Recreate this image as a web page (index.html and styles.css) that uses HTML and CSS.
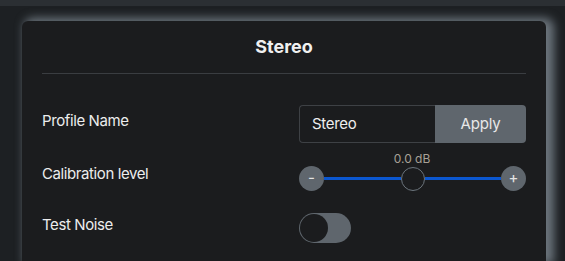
FILE: index.html
```html
<!DOCTYPE html>
<html lang="en">
<head>
<meta charset="utf-8">
<title>Stereo</title>
<link rel="stylesheet" href="styles.css">
</head>
<body>
<div class="topbar"></div>
<div class="card">
  <div class="card-header">Stereo</div>
  <div class="card-body">
    <div class="row">
      <div class="label">Profile Name</div>
      <div class="control">
        <div class="input-group">
          <div class="input">Stereo</div>
          <div class="btn">Apply</div>
        </div>
      </div>
    </div>
    <div class="row row-slider">
      <div class="label">Calibration level</div>
      <div class="control">
        <div class="slider-value">0.0 dB</div>
        <div class="slider">
          <div class="step">-</div>
          <div class="track"></div>
          <div class="thumb"></div>
          <div class="track"></div>
          <div class="step">+</div>
        </div>
      </div>
    </div>
    <div class="row row-toggle">
      <div class="label">Test Noise</div>
      <div class="control">
        <div class="toggle"><div class="knob"></div></div>
      </div>
    </div>
  </div>
</div>
</body>
</html>
```
FILE: styles.css
```css
* { box-sizing: border-box; }
html, body { height: 100%; }
body {
  margin: 0;
  background: #1d2023;
  font-family: Inter, "Noto Sans", sans-serif;
  color: #eceded;
  overflow: hidden;
}
.topbar {
  height: 6px;
  background: #2b2f33;
}
.card {
  margin: 15px 0 0 22px;
  width: 524px;
  height: calc(100vh - 21px);
  background: #1b1c1e;
  border-radius: 6px 6px 0 0;
  box-shadow: 5px 0 10px 3px #6c757d;
  padding: 0 20px;
}
.card-header {
  padding: 15px 0;
  line-height: 22px;
  font-size: 18px;
  font-weight: 700;
  text-align: center;
  color: #f0f0f0;
  border-bottom: 1px solid #3a3d41;
}
.card-body {
  padding-top: 31px;
}
.row {
  display: flex;
  align-items: center;
}
.label {
  width: 257px;
  font-size: 15px;
  line-height: 18px;
  letter-spacing: -0.4px;
  margin-bottom: 6px;
}
.control {
  width: 227px;
}
.input-group {
  display: flex;
  height: 38px;
}
.input {
  flex: 1;
  border: 1px solid #3e4145;
  border-right: none;
  border-radius: 4px 0 0 4px;
  padding-left: 12px;
  font-size: 15px;
  letter-spacing: -0.3px;
  line-height: 36px;
  color: #eeeeee;
}
.btn {
  width: 91px;
  background: #5f666d;
  border-radius: 0 4px 4px 0;
  text-align: center;
  font-size: 15px;
  letter-spacing: -0.2px;
  line-height: 38px;
  color: #e8e8e8;
}
.row-slider {
  margin-top: 9px;
  align-items: flex-end;
}
.row-slider .label {
  margin-bottom: 8px;
}
.slider-value {
  text-align: center;
  font-size: 12px;
  line-height: 14px;
  color: #a8a196;
  padding-right: 1px;
}
.slider {
  display: flex;
  align-items: center;
  height: 25px;
}
.step {
  width: 25px;
  height: 25px;
  border-radius: 50%;
  background: #5f666d;
  color: #e4e4e4;
  font-size: 15px;
  line-height: 24px;
  text-align: center;
  flex: none;
}
.track {
  flex: 1;
  height: 3px;
  background: #0b57d0;
}
.thumb {
  width: 24px;
  height: 24px;
  border-radius: 50%;
  border: 1px solid #6c757d;
  background: #1b1c1e;
  flex: none;
}
.row-toggle {
  margin-top: 22px;
}
.toggle {
  width: 52px;
  height: 30px;
  border-radius: 15px;
  background: #5f666d;
  padding: 1px;
}
.knob {
  width: 28px;
  height: 28px;
  border-radius: 50%;
  background: #1b1c1e;
}
```
